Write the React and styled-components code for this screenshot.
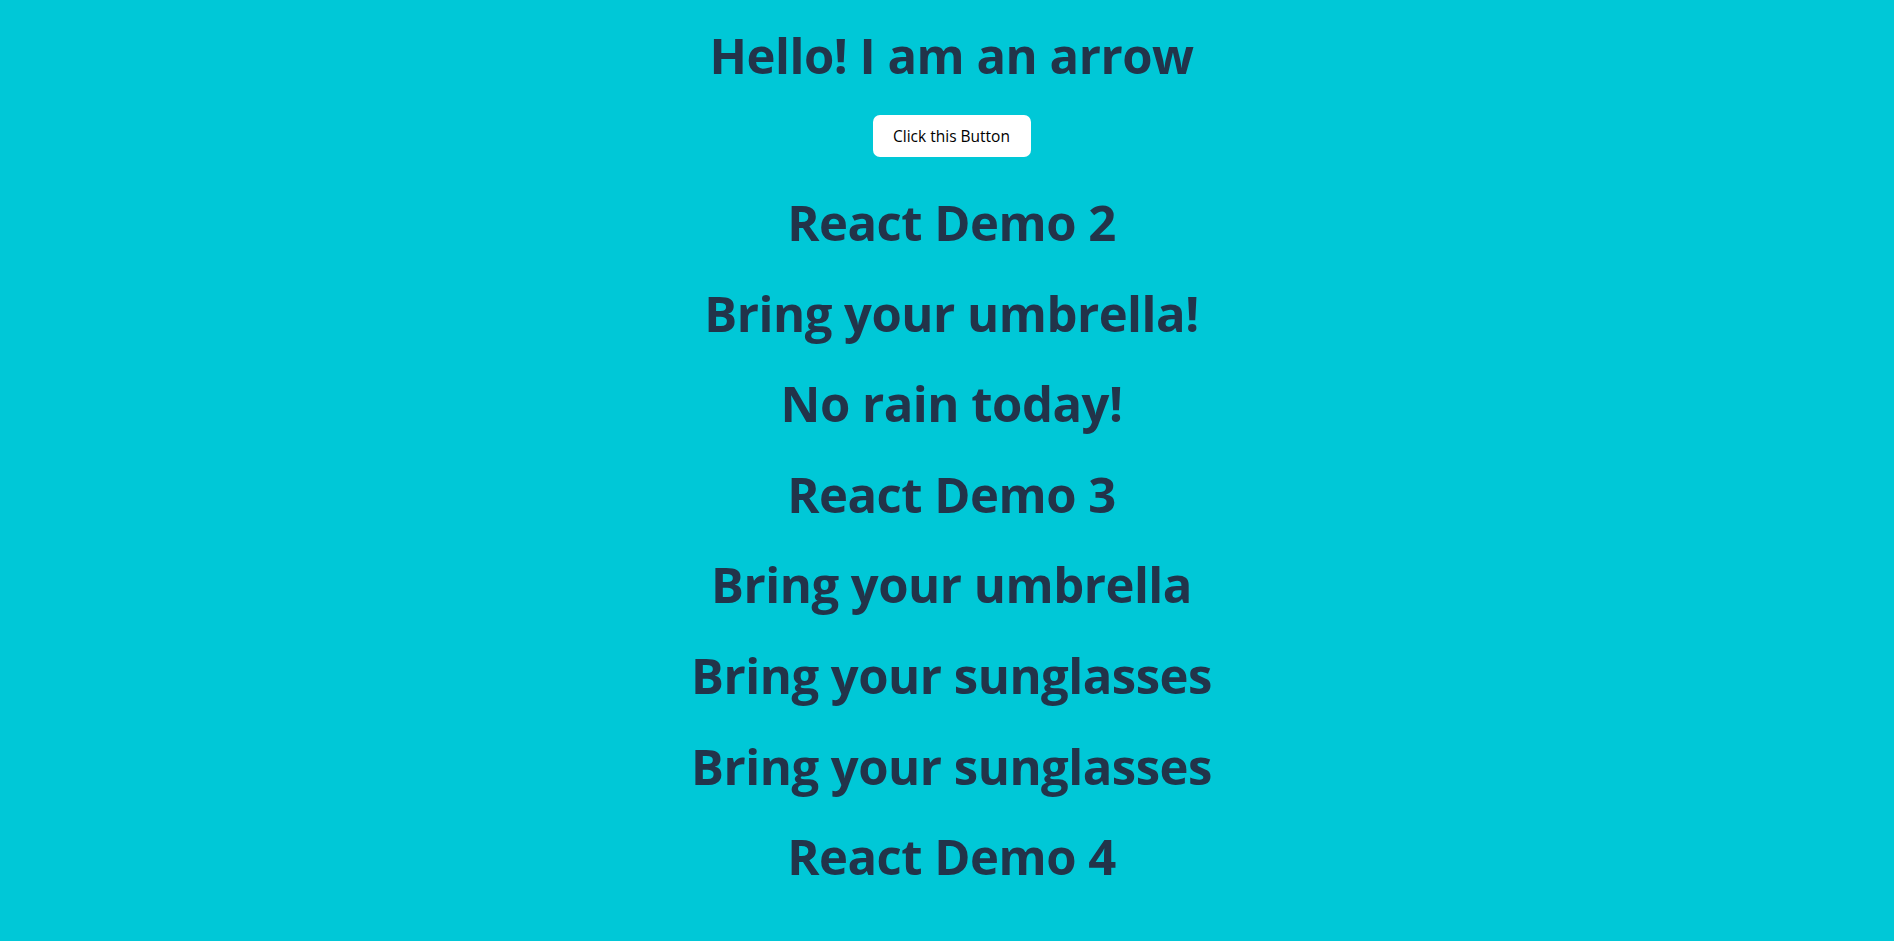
import styled, { createGlobalStyle } from 'styled-components';

const GlobalStyle = createGlobalStyle`
    html, body {
        margin: 0;
        padding: 0;
        background: #00c8d7;
    }
    body {
        font-family: 'Open Sans', 'Noto Sans', sans-serif;
    }
`

const lines = [
    'React Demo 2',
    'Bring your umbrella!',
    'No rain today!',
    'React Demo 3',
    'Bring your umbrella',
    'Bring your sunglasses',
    'Bring your sunglasses',
    'React Demo 4',
];

export default function App(){
    return(
        <Container>
            <GlobalStyle />
            <Titulo>Hello! I am an arrow</Titulo>
            <Botao>Click this Button</Botao>
            <Lista>
                {lines.map((texto, i) => <Titulo key={i}>{texto}</Titulo>)}
            </Lista>
        </Container>
    )
}

const Container = styled.div`
    min-height: 941px;
    display: flex;
    flex-direction: column;
    align-items: center;
    padding: 21px 0 0 9px;
    box-sizing: border-box;
`

const Titulo = styled.h1`
    margin: 0;
    font-family: 'Open Sans', 'Noto Sans', sans-serif;
    font-weight: 700;
    font-size: 49px;
    line-height: 68px;
    letter-spacing: -0.01em;
    color: #22344a;
`

const Botao = styled.button`
    margin-top: 26px;
    width: 158px;
    height: 42px;
    border: none;
    border-radius: 7px;
    background: #ffffff;
    color: #000000;
    font-family: 'Open Sans', 'Noto Sans', sans-serif;
    font-size: 15.5px;
`

const Lista = styled.div`
    margin-top: 31px;
    display: flex;
    flex-direction: column;
    align-items: center;
    gap: 22.6px;
`
